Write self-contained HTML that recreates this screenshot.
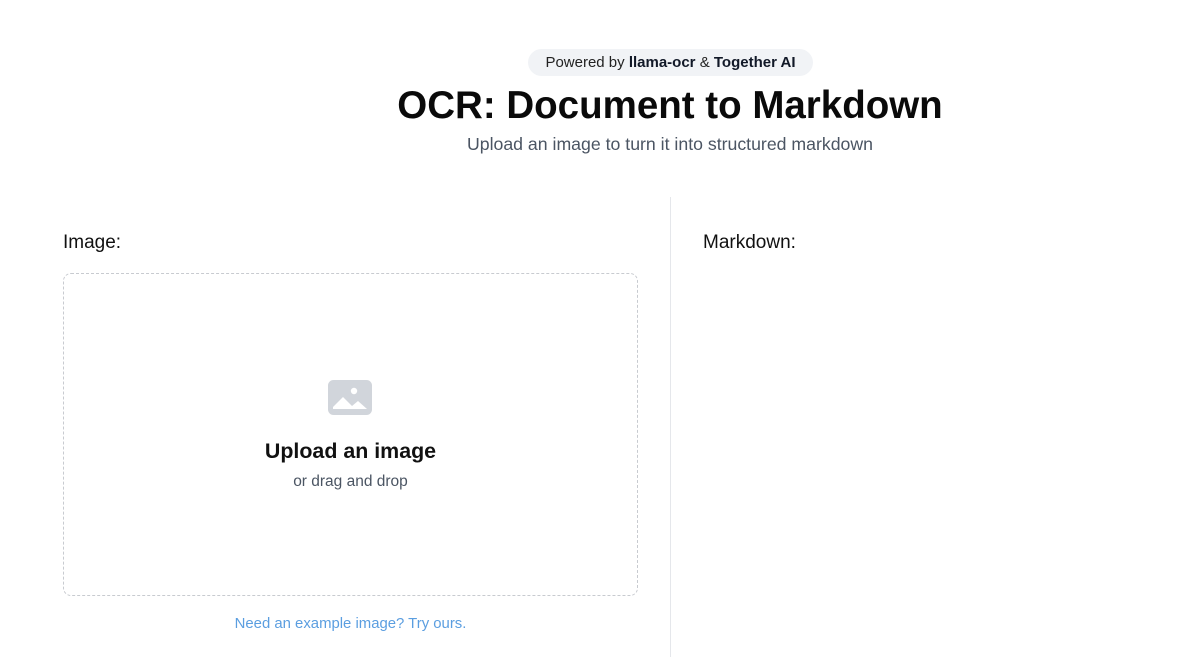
<!DOCTYPE html>
<html><head><style>
body{margin:0;width:1188px;height:656px;background:#fff;font-family:"Liberation Sans",sans-serif;position:relative;overflow:hidden;color:#111}
.pill{position:absolute;left:528px;top:49px;width:285px;height:27px;border-radius:14px;background:#f1f3f6;font-size:15px;color:#222;text-align:center;line-height:27px}
.pill b{color:#111827}
h1{position:absolute;left:0;width:1340px;text-align:center;top:84px;margin:0;font-size:38.5px;font-weight:bold;color:#0a0a0a}
.sub{position:absolute;left:0;width:1340px;text-align:center;top:134px;font-size:17.7px;color:#4b5563}
.div{position:absolute;left:670px;top:197px;width:1px;height:460px;background:#e5e7eb}
.lbl{position:absolute;top:232px;font-size:19px;color:#111}
.drop{position:absolute;left:63px;top:273px;width:573px;height:321px;border:1px dashed #c8cbd0;border-radius:8px}
.t1{position:absolute;left:63px;width:575px;text-align:center;top:439px;font-size:21.4px;font-weight:bold;color:#111}
.t2{position:absolute;left:63px;width:575px;text-align:center;top:473px;font-size:15.5px;color:#4b5563}
.ex{position:absolute;left:63px;width:575px;text-align:center;top:616px;font-size:14.9px;color:#5b9ee0}
</style></head><body>
<div class="pill">Powered by <b>llama-ocr</b> &amp; <b>Together AI</b></div>
<h1>OCR: Document to Markdown</h1>
<div class="sub">Upload an image to turn it into structured markdown</div>
<div class="div"></div>
<div class="lbl" style="left:63px">Image:</div>
<div class="lbl" style="left:703px">Markdown:</div>
<div class="drop"></div>
<svg style="position:absolute;left:328px;top:380px" width="44" height="35" viewBox="0 0 44 35">
<rect x="1.5" y="1.5" width="41" height="32" rx="4" fill="none" stroke="#d1d5db" stroke-width="3"/>
<rect x="3" y="3" width="38" height="29" fill="#d1d5db"/>
<path d="M5 29 L5 27 L15 17 L24 26 L30 21 L39 29 Z" fill="#fff"/>
<circle cx="26" cy="11" r="3.2" fill="#fff"/>
</svg>
<div class="t1">Upload an image</div>
<div class="t2">or drag and drop</div>
<div class="ex">Need an example image? Try ours.</div>
</body></html>
